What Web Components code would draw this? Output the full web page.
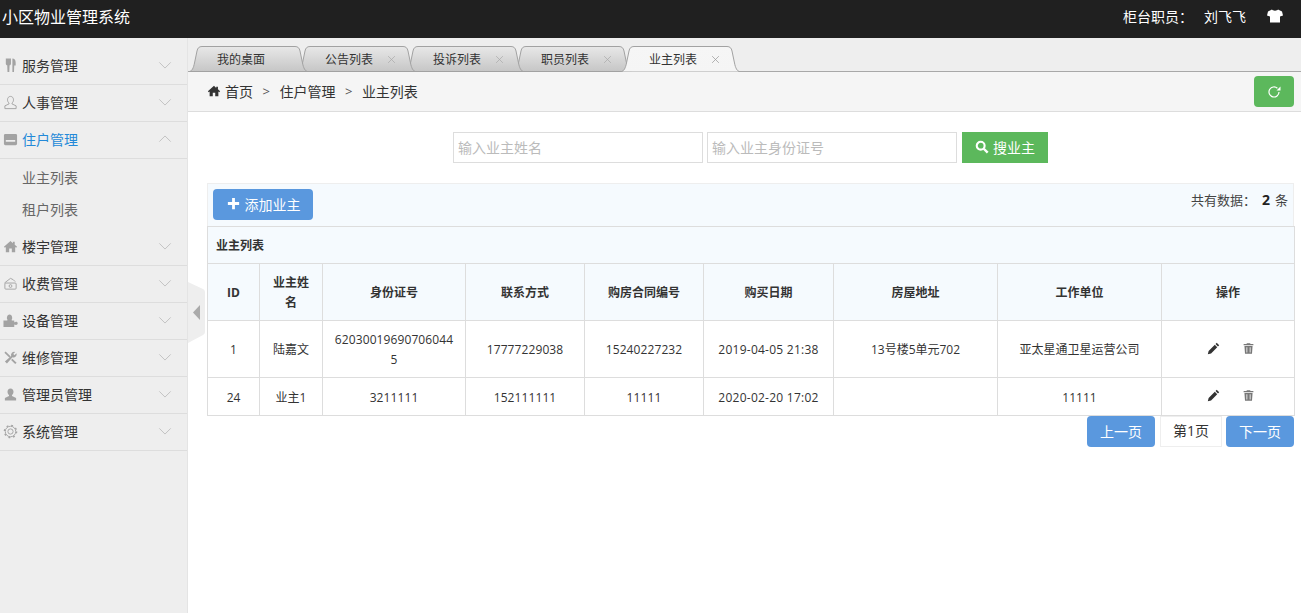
<!DOCTYPE html>
<html lang="zh">
<head>
<meta charset="utf-8">
<title>小区物业管理系统</title>
<style>
html, body {
    margin: 0;
    height: 100%;
    overflow: hidden;
    background: white;
    color: #333;
    font-family: "Open Sans", "Noto Sans CJK SC", sans-serif;
}
</style>
</head>
<body>
<app-shell></app-shell>

<script>
const icons = {
    home: `<path fill='currentColor' d='M8 2 1 8.2l1 1.2 1-.8V14h3.6v-4h2.8v4H13V8.6l1 .8 1-1.2-2.5-2.2V3h-2v1.5z'/>`,
    user: `<path fill='currentColor' d='M8 1.5c-2 0-3.2 1.6-3.2 3.6 0 1.5.7 2.8 1.6 3.4v1L2 11.6v2.9h12v-2.9L9.6 9.5v-1c.9-.6 1.6-1.9 1.6-3.4 0-2-1.2-3.6-3.2-3.6z'/>`,
    userline: `<path fill='none' stroke='currentColor' d='M8 1.5c-2 0-3.2 1.6-3.2 3.6 0 1.5.7 2.8 1.6 3.4v1L2 11.6v2.9h12v-2.9L9.6 9.5v-1c.9-.6 1.6-1.9 1.6-3.4 0-2-1.2-3.6-3.2-3.6z'/>`,
    card: `<path fill='currentColor' fill-rule='evenodd' d='M2.5 2h11A1.5 1.5 0 0 1 15 3.500v9a1.500 1.500 0 0 1-1.500 1.500h-11A1.500 1.500 0 0 1 1 12.500v-9A1.500 1.500 0 0 1 2.500 2zM3 8.500v2h10v-2z'/>`,
    cutlery: `<path fill='currentColor' d='M3 .5h5.500V6c0 1-.7 1.500-1.500 1.700L6.700 15H4.800L4.500 7.700C3.700 7.500 3 7 3 6zM10 .5c2.200 0 3.500 1.500 3.500 4.500V8h-1.500l-.3 7H10z'/>`,
    fee: `<g fill='none' stroke='currentColor'><path d='M1.500 7.500 8 2.500l3 1.500 2 2'/><rect x='2' y='7.500' width='12' height='6.500' rx='1'/><circle cx='8' cy='10.700' r='1.500'/></g>`,
    puzzle: `<path fill='currentColor' d='M.5 8h3.800c.6 0 .7-.5.300-1C3.800 5.800 4 1.500 7 1.500S10.200 5.800 9.400 7c-.4.500-.3 1 .3 1H12v1.200c0 .6.6.7 1.100.3.700-.5 2.600-.3 2.600 1.500s-1.900 2-2.600 1.500c-.5-.4-1.100-.3-1.100.3V15H.5z'/>`,
    tools: `<path fill='currentColor' d='M2.800 1.500 8 6.700 6.700 8 1.500 2.800zM14.500 3.500a3.500 3.500 0 0 1-4.400 4.300L4.200 14.500 2 12.300l6.700-5.900a3.500 3.500 0 0 1 4.300-4.400L11 4l1 1.500zM10 9.300l4.500 4.200-1.500 1.500L8.600 10.600z'/>`,
    gear: `<g fill='none' stroke='currentColor'><circle cx='8' cy='8' r='5.600'/><circle cx='8' cy='8' r='2.800'/><circle cx='8' cy='8' r='6.500' stroke-width='1.500' stroke-dasharray='2 3.100'/></g>`,
    shirt: `<path fill='currentColor' d='M5 1.500 1 3.500 0 7.500l3 1V14.500h10V8.500l3-1-1-4-4-2c-.5 1.500-5.500 1.500-6 0z'/>`,
    refresh: `<path fill='none' stroke='currentColor' stroke-width='1.200' d='M13 8a5 5 0 1 1-1.600-3.700'/><path fill='currentColor' d='M10.500 6.500h4v-4z'/>`,
    search: `<circle cx='6.500' cy='6.500' r='4.500' fill='none' stroke='currentColor' stroke-width='2.400'/><path stroke='currentColor' stroke-width='2.800' d='m10 10 4.500 4.500'/>`,
    plus: `<path fill='currentColor' d='M6.500 2h3v4.500H14v3H9.500V14h-3V9.500H2v-3h4.500z'/>`,
    pencil: `<path fill='currentColor' d='M12 1l3 3-1.500 1.500-3-3zM9.600 3.400l3 3L5 14l-4 1 1-4z'/>`,
    trash: `<path fill='currentColor' d='M6 1.500h4l.5 1H14V4H2V2.500h3.500zM3 5h10l-.7 9.500H3.700zM5.500 6.500v6.500h1V6.500zm4 0v6.500h1V6.500z'/>`,
    close: `<path fill='none' stroke='currentColor' stroke-width='1.300' d='m2 2 12 12M14 2 2 14'/>`,
    down: `<path fill='none' stroke='currentColor' d='m1.500 5 6.500 6.500L14.500 5'/>`,
    up: `<path fill='none' stroke='currentColor' d='M1.500 11 8 4.500l6.500 6.500'/>`
}

class AppIcon extends HTMLElement {
    connectedCallback() {
        const size = this.getAttribute('size') || 16
        this.attachShadow({ mode: 'open' })
        this.shadowRoot.innerHTML = `<style>
            :host { display: inline-flex; flex: none; width: ${size}px; height: ${size}px; }
            svg { display: block; width: 100%; height: 100%; }
        </style>
        <svg viewBox='0 0 16 16'>${icons[this.getAttribute('name')]}</svg>`
    }
}

class TopBar extends HTMLElement {
    constructor() {
        super()
        this.attachShadow({ mode: 'open' })
    }

    connectedCallback() {
        this.shadowRoot.innerHTML = `<style>
            :host { display: flex; align-items: center; height: 38px; padding: 0 18px 6px 2px; box-sizing: border-box; background: #202020; color: white; flex: none; }
            .title { font-size: 16px; flex: 1; }
            .role { font-size: 14px; }
            .name { font-size: 14px; margin: 0 21px 0 11px; }
        </style>
        <div class='title'>小区物业管理系统</div>
        <div class='role'>柜台职员：</div>
        <div class='name'>刘飞飞</div>
        <app-icon name='shirt'></app-icon>`
    }
}

const menu = [
    { icon: 'cutlery', name: '服务管理' },
    { icon: 'userline', name: '人事管理' },
    { icon: 'card', name: '住户管理', open: true, subs: ['业主列表', '租户列表'] },
    { icon: 'home', name: '楼宇管理' },
    { icon: 'fee', name: '收费管理' },
    { icon: 'puzzle', name: '设备管理' },
    { icon: 'tools', name: '维修管理' },
    { icon: 'user', name: '管理员管理' },
    { icon: 'gear', name: '系统管理' }
]

function makeMenuItem(data) {
    const subs = data.subs ? `<div class='subs'>${data.subs.map(s => `<div class='sub'>${s}</div>`).join('')}</div>` : ''
    return `
        <div class='item ${data.open ? 'open' : ''}'>
            <app-icon class='ico' name='${data.icon}' size='15'></app-icon>
            <span class='label'>${data.name}</span>
            <app-icon class='arrow' name='${data.open ? 'up' : 'down'}' size='14'></app-icon>
        </div>
        ${subs}
    `
}

class SideMenu extends HTMLElement {
    constructor() {
        super()
        this.attachShadow({ mode: 'open' })
    }

    connectedCallback() {
        this.shadowRoot.innerHTML = `<style>
            :host { display: block; width: 188px; flex: none; box-sizing: border-box; padding-top: 10px; background: #eee; border-right: 1px solid #e4e4e4; font-size: 14px; }
            .item { display: flex; align-items: center; height: 37px; box-sizing: border-box; padding: 0 15px 2px 3px; border-bottom: 1px solid #ddd; color: #333; }
            .ico { color: #a3a3a3; margin-right: 4px; }
            .label { flex: 1; }
            .arrow { color: #bbb; }
            .open .label { color: #2389d8; }
            .subs { padding: 3px 0; border-bottom: 0; }
            .sub { height: 32px; line-height: 32px; padding-left: 22px; color: #666; }
        </style>
        ${menu.map(m => makeMenuItem(m)).join('')}`
    }
}

class TabItem extends HTMLElement {
    constructor() {
        super()
        this.attachShadow({ mode: 'open' })
    }

    connectedCallback() {
        const active = this.hasAttribute('active')
        const line = 'M.5 25.500C3 25 4.500 22 5.500 17L8 5C8.700 2 10 .5 13 .5H106C109 .5 110.300 2 111 5L113.500 17C114.500 22 116 25 118.500 25.500'
        const closeBtn = this.hasAttribute('closable') ? `<app-icon class='close' name='close' size='9'></app-icon>` : ''
        this.shadowRoot.innerHTML = `<style>
            :host { display: flex; align-items: center; position: relative; width: 119px; height: 26px; margin-right: -11px; padding-left: 28px; box-sizing: border-box; font-size: 12px; color: #333; }
            svg.bg { position: absolute; left: 0; top: 0; width: 119px; height: 26px; }
            .text { position: relative; }
            .close { position: relative; margin-left: 14px; color: ${active ? '#999' : '#aaa'}; }
        </style>
        <svg class='bg' viewBox='0 0 119 26'>
            <defs><linearGradient id='g' x1='0' y1='0' x2='0' y2='1'>
                <stop offset='0' stop-color='${active ? '#f6f6f6' : '#e8e8e8'}'/>
                <stop offset='1' stop-color='${active ? '#f5f5f5' : '#c6c6c6'}'/>
            </linearGradient></defs>
            <path d='${line}${active ? '' : 'Z'}' fill='url(#g)' stroke='#a2a2a2'/>
        </svg>
        <span class='text'><slot></slot></span>${closeBtn}`
    }
}

class TabBar extends HTMLElement {
    constructor() {
        super()
        this.attachShadow({ mode: 'open' })
    }

    connectedCallback() {
        this.shadowRoot.innerHTML = `<style>
            :host { display: flex; align-items: flex-end; height: 34px; box-sizing: border-box; padding-left: 1px; background: #eee; border-bottom: 1px solid #a8a8a8; flex: none; }
            .row { display: flex; margin-bottom: -1px; }
        </style>
        <div class='row'><slot></slot></div>`
        const tabs = [...this.children]
        tabs.forEach((t, i) => { t.style.zIndex = t.hasAttribute('active') ? 20 : 10 - i })
    }
}

class BreadCrumb extends HTMLElement {
    constructor() {
        super()
        this.attachShadow({ mode: 'open' })
    }

    connectedCallback() {
        this.shadowRoot.innerHTML = `<style>
            :host { display: flex; align-items: center; height: 40px; box-sizing: border-box; padding: 0 7px 0 19px; background: #f5f5f5; border-bottom: 1px solid #ddd; font-size: 14px; color: #333; flex: none; }
            .home { margin-right: 4px; }
            .sep { margin: 0 9.500px; color: #555; font-size: 13px; }
            .crumbs { flex: 1; display: flex; align-items: center; padding-bottom: 2px; }
            button { width: 40px; height: 31px; margin: 0; padding: 0; border: 0; border-radius: 4px; background: #5cb85c; color: white; display: flex; align-items: center; justify-content: center; }
        </style>
        <div class='crumbs'>
            <app-icon class='home' name='home' size='14'></app-icon>
            <span>首页</span><span class='sep'>&gt;</span><span>住户管理</span><span class='sep'>&gt;</span><span>业主列表</span>
        </div>
        <button><app-icon name='refresh' size='16'></app-icon></button>`
    }
}

class SearchBar extends HTMLElement {
    constructor() {
        super()
        this.attachShadow({ mode: 'open' })
    }

    connectedCallback() {
        this.shadowRoot.innerHTML = `<style>
            :host { display: flex; justify-content: center; }
            input { width: 250px; height: 31px; box-sizing: border-box; margin-right: 4px; padding: 0 4px; border: 1px solid #ddd; outline: none; font: inherit; font-size: 14px; }
            input::placeholder { color: #bbb; }
            button { width: 86px; height: 31px; margin-left: 1px; padding: 0 0 2px; border: 0; background: #5cb85c; color: white; font: inherit; font-size: 14px; display: flex; align-items: center; justify-content: center; gap: 4px; }
        </style>
        <input placeholder='输入业主姓名'>
        <input placeholder='输入业主身份证号'>
        <button><app-icon name='search' size='14'></app-icon>搜业主</button>`
    }
}

const owners = [
    { id: 1, name: '陆嘉文', card: '620300196907060445', phone: '17777229038', contract: '15240227232', date: '2019-04-05 21:38', addr: '13号楼5单元702', work: '亚太星通卫星运营公司' },
    { id: 24, name: '业主1', card: '3211111', phone: '152111111', contract: '11111', date: '2020-02-20 17:02', addr: '', work: '11111' }
]
const columns = [
    ['ID', 52], ['业主姓名', 63], ['身份证号', 143], ['联系方式', 119], ['购房合同编号', 119],
    ['购买日期', 130], ['房屋地址', 164], ['工作单位', 164], ['操作', 133]
]

function makeRow(o, h) {
    return `
        <tr style='height:${h}px'>
            <td>${o.id}</td><td>${o.name}</td><td class='num card'>${o.card}</td><td class='num'>${o.phone}</td><td class='num'>${o.contract}</td>
            <td class='date'>${o.date}</td><td>${o.addr}</td><td>${o.work}</td>
            <td><div class='ops'><app-icon class='edit' name='pencil' size='13'></app-icon><app-icon class='del' name='trash' size='13'></app-icon></div></td>
        </tr>
    `
}

class OwnerTable extends HTMLElement {
    constructor() {
        super()
        this.attachShadow({ mode: 'open' })
    }

    connectedCallback() {
        this.shadowRoot.innerHTML = `<style>
            :host { display: block; font-size: 12px; color: #333; }
            .bar { display: flex; justify-content: space-between; height: 43px; box-sizing: border-box; padding: 5px 5px 0 5px; background: #f5fafe; border: 1px solid #eee; border-bottom: 0; }
            .add { width: 100px; height: 31px; padding: 0 0 2px; border: 0; border-radius: 4px; background: #5a98de; color: white; font: inherit; font-size: 14px; display: flex; align-items: center; justify-content: center; gap: 4px; }
            .count { font-size: 13px; line-height: 22px; color: #444; }
            .count b { font-size: 14px; color: #222; margin: 0 5px 0 6px; }
            table { width: 100%; table-layout: fixed; border-collapse: collapse; }
            th, td { border: 1px solid #ddd; padding: 9px 8px 7px; line-height: 20px; text-align: center; word-break: break-all; vertical-align: middle; }
            .num { letter-spacing: .1px; }
            .card { padding-left: 10px; padding-right: 10px; }
            .date { letter-spacing: .25px; }
            .cap th, thead th { background: #f5fafe; }
            .cap th { text-align: left; }
            .ops { display: flex; justify-content: center; align-items: center; gap: 22px; margin-bottom: 4px; padding-left: 6px; }
            .edit { color: #333; }
            .del { color: #777; }
        </style>
        <div class='bar'>
            <button class='add'><app-icon name='plus' size='15'></app-icon>添加业主</button>
            <div class='count'>共有数据：<b>2</b>条</div>
        </div>
        <table>
            <colgroup>${columns.map(c => `<col style='width:${c[1]}px'>`).join('')}</colgroup>
            <thead>
                <tr class='cap'><th colspan='9'>业主列表</th></tr>
                <tr>${columns.map(c => `<th>${c[0]}</th>`).join('')}</tr>
            </thead>
            <tbody>${makeRow(owners[0], 57)}${makeRow(owners[1], 38)}</tbody>
        </table>`
    }
}

class PageBar extends HTMLElement {
    constructor() {
        super()
        this.attachShadow({ mode: 'open' })
    }

    connectedCallback() {
        this.shadowRoot.innerHTML = `<style>
            :host { display: flex; justify-content: flex-end; font-size: 14px; }
            button { width: 68px; height: 31px; padding: 0 0 2px; border: 0; border-radius: 4px; background: #5a98de; color: white; font: inherit; }
            .cur { width: 62px; height: 31px; line-height: 27px; box-sizing: border-box; margin: 0 4px 0 5px; border: 1px solid #eee; text-align: center; color: #333; }
        </style>
        <button>上一页</button><div class='cur'>第1页</div><button>下一页</button>`
    }
}

class AppShell extends HTMLElement {
    constructor() {
        super()
        this.attachShadow({ mode: 'open' })
    }

    connectedCallback() {
        this.shadowRoot.innerHTML = `<style>
            :host { display: flex; flex-direction: column; height: 613px; }
            .body { flex: 1; display: flex; min-height: 0; position: relative; }
            .main { flex: 1; min-width: 0; display: flex; flex-direction: column; }
            .page { padding: 20px 7px 0 19px; }
            owner-table { margin-top: 20px; }
            .fold { position: absolute; left: 188px; top: 244px; width: 17px; height: 61px; }
        </style>
        <top-bar></top-bar>
        <div class='body'>
            <side-menu></side-menu>
            <div class='main'>
                <tab-bar>
                    <tab-item>我的桌面</tab-item>
                    <tab-item closable>公告列表</tab-item>
                    <tab-item closable>投诉列表</tab-item>
                    <tab-item closable>职员列表</tab-item>
                    <tab-item closable active>业主列表</tab-item>
                </tab-bar>
                <bread-crumb></bread-crumb>
                <div class='page'>
                    <search-bar></search-bar>
                    <owner-table></owner-table>
                    <page-bar></page-bar>
                </div>
            </div>
            <svg class='fold' viewBox='0 0 17 61'>
                <path d='M0 0 15 7Q17 8 17 10V50Q17 52 15 53L0 61z' fill='#eee'/>
                <path d='M5 30.500 12 23V38z' fill='#aaa'/>
            </svg>
        </div>`
    }
}

customElements.define('app-icon', AppIcon)
customElements.define('top-bar', TopBar)
customElements.define('side-menu', SideMenu)
customElements.define('tab-item', TabItem)
customElements.define('tab-bar', TabBar)
customElements.define('bread-crumb', BreadCrumb)
customElements.define('search-bar', SearchBar)
customElements.define('owner-table', OwnerTable)
customElements.define('page-bar', PageBar)
customElements.define('app-shell', AppShell)
</script>
</body>
</html>
